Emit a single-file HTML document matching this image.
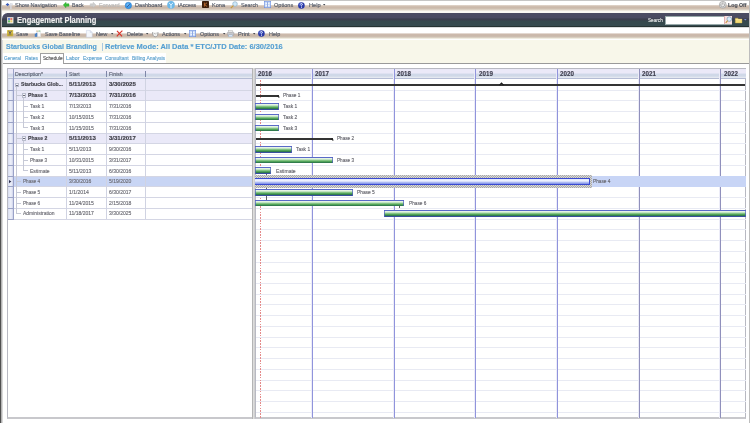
<!DOCTYPE html><html><head><meta charset="utf-8"><title>Engagement Planning</title><style>
*{margin:0;padding:0;box-sizing:border-box}
html,body{width:750px;height:423px;overflow:hidden;background:#fff;font-family:"Liberation Sans",sans-serif}
.a{position:absolute}
.t{position:absolute;white-space:nowrap;line-height:1;transform-origin:0 0;-webkit-text-stroke:0.15px currentColor}
</style></head><body><div id="root" style="position:absolute;left:0;top:0;width:750px;height:423px;overflow:hidden;filter:blur(0.5px)">
<div class="a" style="left:0.00px;top:0.00px;width:750.00px;height:1.00px;background:#c6c6c6"></div>
<div class="a" style="left:1.00px;top:1.00px;width:749.00px;height:11.80px;background:linear-gradient(to bottom,#fff 0px,#fff 3.5px,#d2c1b3 4.8px,#cbb9ab 6.5px,#d0c2b4 8px,#efeadf 9.6px,#fbfaf3 10.5px,#fbfaf3 11.8px)"></div>
<div class="a" style="left:2px;top:12.8px;width:746.8px;height:14.4px;border-top-left-radius:5.5px 6px;background:linear-gradient(to bottom,#4c4c63 0px,#4a4b61 4.5px,#3d404f 6px,#3b3f4c 7px,#36484d 8px,#364a4e 12.5px,#24302f 13.6px,#1e2a2c 14.4px)"></div>
<div class="a" style="left:1.00px;top:27.20px;width:749.00px;height:12.30px;background:linear-gradient(to bottom,#9aa0a0 0px,#fff 0.8px,#fff 5.8px,#cfbdb0 7px,#c9b6a8 8px,#cdbfb1 10px,#efece0 11.5px,#f7f6e9 12.3px)"></div>
<div class="a" style="left:1.00px;top:39.50px;width:748.50px;height:23.50px;background:#f8f7ea"></div>
<div class="a" style="left:0.00px;top:0.00px;width:1.00px;height:423.00px;background:#505050"></div>
<div class="a" style="left:1.00px;top:0.00px;width:1.00px;height:423.00px;background:#b4b4b4"></div>
<div class="t" style="left:15.00px;top:1.99px;font-size:6.2px;color:#535a68;transform:scaleX(0.9027);">Show Navigation</div>
<div class="t" style="left:71.60px;top:1.99px;font-size:6.2px;color:#535a68;transform:scaleX(0.8488);">Back</div>
<div class="t" style="left:99.30px;top:1.99px;font-size:6.2px;color:#b9b9b9;transform:scaleX(0.9104);">Forward</div>
<div class="t" style="left:135.30px;top:1.99px;font-size:6.2px;color:#535a68;transform:scaleX(0.9034);">Dashboard</div>
<div class="t" style="left:178.00px;top:1.99px;font-size:6.2px;color:#535a68;transform:scaleX(0.8567);">iAccess</div>
<div class="t" style="left:211.60px;top:1.99px;font-size:6.2px;color:#535a68;transform:scaleX(0.9048);">Kona</div>
<div class="t" style="left:240.80px;top:1.99px;font-size:6.2px;color:#535a68;transform:scaleX(0.8705);">Search</div>
<div class="t" style="left:273.60px;top:1.99px;font-size:6.2px;color:#535a68;transform:scaleX(0.8986);">Options</div>
<div class="t" style="left:308.80px;top:1.99px;font-size:6.2px;color:#535a68;transform:scaleX(0.9176);">Help</div>
<svg class="a" style="left:323.4px;top:4.2px;overflow:visible" width="2.6" height="2" viewBox="0 0 2.6 2"><path d="M0 0H2.4L1.2 1.6Z" fill="#3a3e48"/></svg>
<div class="t" style="left:728.40px;top:1.99px;font-size:6.2px;color:#4a4e56;font-weight:bold;transform:scaleX(0.8441);">Log Off</div>
<svg class="a" style="left:5px;top:1.8px;overflow:visible" width="8" height="7" viewBox="0 0 8 7"><path d="M0.6 2.6L3.2 0.8L3.2 4.4Z" fill="#3a5ab8"/><rect x="2.6" y="2" width="1.6" height="1.2" fill="#3a5ab8"/><rect x="5.2" y="1" width="1.4" height="6.2" fill="#d4d8e0"/><rect x="6.8" y="1.6" width="1" height="1" fill="#c0c6d0"/></svg>
<svg class="a" style="left:62.5px;top:1.8px;overflow:visible" width="6.2" height="6" viewBox="0 0 6.2 6"><path d="M0.2 3L3 0.2L3 1.8L6 1.8L6 4.2L3 4.2L3 5.8Z" fill="#38c038" stroke="#2a9a2a" stroke-width="0.4"/></svg>
<svg class="a" style="left:90px;top:1.8px;overflow:visible" width="6.2" height="6" viewBox="0 0 6.2 6"><path d="M6 3L3.2 0.2L3.2 1.8L0.2 1.8L0.2 4.2L3.2 4.2L3.2 5.8Z" fill="#cfcfcf" stroke="#b8b8b8" stroke-width="0.4"/></svg>
<svg class="a" style="left:125.3px;top:1.8px;overflow:visible" width="7" height="7" viewBox="0 0 7 7"><circle cx="3.4" cy="3.5" r="3.2" fill="#3a98e8" stroke="#2a78c8" stroke-width="0.5"/><circle cx="3.0" cy="2.8" r="1.6" fill="#7cc4f8" opacity="0.8"/><path d="M2.2 4.8L4.6 2.2" stroke="#283878" stroke-width="0.8"/></svg>
<svg class="a" style="left:166.6px;top:1.0px;overflow:visible" width="8" height="8" viewBox="0 0 8 8"><circle cx="4" cy="3.9" r="3.8" fill="#6cb8e8"/><path d="M2 1.8L4 4L6 1.8M4 4L4 7.2" stroke="#e8f6ff" stroke-width="0.9" fill="none"/></svg>
<svg class="a" style="left:201.7px;top:1.4px;overflow:visible" width="7.2" height="7.2" viewBox="0 0 7.2 7.2"><rect x="0" y="0" width="7" height="7" rx="0.8" fill="#3a1e0c"/><path d="M2.4 1.6L2.4 5.6M5 1.8L2.6 3.6L5.2 5.6" stroke="#d07a3a" stroke-width="0.8" fill="none"/></svg>
<svg class="a" style="left:229.8px;top:1.2px;overflow:visible" width="8" height="8" viewBox="0 0 8 8"><circle cx="5" cy="3" r="2.3" fill="#cfe8f8" stroke="#8ab0cc" stroke-width="0.7"/><path d="M3.4 4.6L0.8 7.2" stroke="#c89a3a" stroke-width="1.2"/></svg>
<svg class="a" style="left:264px;top:1.3px;overflow:visible" width="7" height="7" viewBox="0 0 7 7"><rect x="0.3" y="0.3" width="6.4" height="6.4" fill="#c8daf8" stroke="#6a8ce0" stroke-width="0.6"/><path d="M1.5 2.4H3M4 2.4H5.5M1.5 4.6H3M4 4.6H5.5" stroke="#fff" stroke-width="0.8"/><path d="M3.5 1V6" stroke="#5a7ad0" stroke-width="0.5"/></svg>
<svg class="a" style="left:298.4px;top:1.6px;overflow:visible" width="7" height="7" viewBox="0 0 7 7"><circle cx="3.4" cy="3.5" r="3.3" fill="#2a3aa8"/><circle cx="2.6" cy="2.4" r="1.6" fill="#5a72d8" opacity="0.7"/><path d="M2.4 2.5Q2.6 1.4 3.6 1.5Q4.6 1.7 4.4 2.6Q4.2 3.2 3.5 3.6L3.5 4.5" stroke="#fff" stroke-width="0.8" fill="none"/><rect x="3.1" y="5.1" width="0.8" height="0.8" fill="#fff"/></svg>
<svg class="a" style="left:718.8px;top:1.0px;overflow:visible" width="7.6" height="7.6" viewBox="0 0 7.6 7.6"><circle cx="3.8" cy="3.8" r="3.4" fill="#e8e8e8" stroke="#9a9a9a" stroke-width="0.7"/><path d="M2.3 2.6A2 2 0 1 0 5.3 2.6" stroke="#8a8a8a" stroke-width="0.7" fill="none"/><path d="M3.8 1.4V3.6" stroke="#8a8a8a" stroke-width="0.7"/></svg>
<svg class="a" style="left:6.6px;top:16.6px;overflow:visible" width="6.4" height="6.4" viewBox="0 0 6.4 6.4"><rect x="0.2" y="0.2" width="6" height="6" fill="#f4f4f4" stroke="#d0d0d0" stroke-width="0.4"/><rect x="1" y="1" width="2.1" height="2.1" fill="#6a8ad8"/><rect x="3.3" y="1" width="2.1" height="2.1" fill="#e07a6a"/><rect x="1" y="3.3" width="2.1" height="2.1" fill="#6ac06a"/><rect x="3.3" y="3.3" width="2.1" height="2.1" fill="#f0d070"/></svg>
<div class="t" style="left:16.50px;top:16.20px;font-size:8.4px;color:#f0f0f0;font-weight:bold;transform:scaleX(0.9013);">Engagement Planning</div>
<div class="t" style="left:648.00px;top:18.07px;font-size:5.6px;color:#e4e6e6;transform:scaleX(0.8342);">Search</div>
<div class="a" style="left:664.90px;top:15.50px;width:67.50px;height:9.30px;background:#fff;border:0.5px solid #9aa"></div>
<div class="a" style="left:724.00px;top:16.00px;width:7.80px;height:8.40px;background:#f6dede;border-left:0.5px solid #e0b0b0"></div>
<svg class="a" style="left:724.6px;top:16.4px;overflow:visible" width="7" height="7.6" viewBox="0 0 7 7.6"><circle cx="4.3" cy="3.1" r="2.3" fill="#d8ecf8" stroke="#7a9ab8" stroke-width="0.7"/><path d="M2.7 4.7L0.7 6.8" stroke="#c8983a" stroke-width="1.1"/></svg>
<svg class="a" style="left:735.2px;top:17px;overflow:visible" width="7.4" height="6.4" viewBox="0 0 7.4 6.4"><path d="M0.3 1.2L2.8 1.2L3.6 2H7V6H0.3Z" fill="#f4dc78" stroke="#c8a840" stroke-width="0.4"/><path d="M0.3 2.6H7" stroke="#fff0b0" stroke-width="0.5"/></svg>
<svg class="a" style="left:744px;top:19.4px;overflow:visible" width="3" height="2" viewBox="0 0 3 2"><path d="M0 0H2.6L1.3 1.6Z" fill="#7a90d0"/></svg>
<svg class="a" style="left:6.6px;top:30.4px;overflow:visible" width="6.4" height="6.4" viewBox="0 0 6.4 6.4"><rect x="0" y="0" width="6.2" height="6.2" rx="0.4" fill="#d4bc48"/><rect x="0.6" y="3.6" width="5" height="2.2" fill="#b8a038"/><path d="M1.6 0.8L3 3.2L4.6 0.8" stroke="#4a4a6a" stroke-width="0.8" fill="none"/><rect x="2.6" y="2.6" width="0.8" height="2" fill="#4a4a6a"/></svg>
<div class="t" style="left:16.30px;top:30.99px;font-size:6.2px;color:#535a68;transform:scaleX(0.8775);">Save</div>
<svg class="a" style="left:34.3px;top:30.3px;overflow:visible" width="7" height="7" viewBox="0 0 7 7"><rect x="3.4" y="1.8" width="3.3" height="5" fill="#f8f8f8" stroke="#c8ccd4" stroke-width="0.3"/><rect x="0.8" y="3.6" width="1.1" height="3.2" fill="#3a7ac8"/><rect x="2.1" y="2.8" width="1.1" height="4" fill="#3a7ac8"/><path d="M2 1.1H4.4" stroke="#c8b080" stroke-width="0.8"/><path d="M4.6 1L6.4 1" stroke="#5ab86a" stroke-width="0.8"/></svg>
<div class="t" style="left:44.70px;top:30.99px;font-size:6.2px;color:#535a68;transform:scaleX(0.8906);">Save Baseline</div>
<svg class="a" style="left:85.6px;top:29.8px;overflow:visible" width="6.8" height="7.8" viewBox="0 0 6.8 7.8"><path d="M0.4 0.4H4.2L6.2 2.4V7.2H0.4Z" fill="#f4f7fc" stroke="#c4cce0" stroke-width="0.5"/><path d="M4.2 0.4V2.4H6.2" fill="#dfe6f2" stroke="#c4cce0" stroke-width="0.4"/></svg>
<div class="t" style="left:96.00px;top:30.99px;font-size:6.2px;color:#535a68;transform:scaleX(0.9111);">New</div>
<svg class="a" style="left:111.0px;top:33.0px;overflow:visible" width="2.6" height="2" viewBox="0 0 2.6 2"><path d="M0 0H2.4L1.2 1.6Z" fill="#3a3e48"/></svg>
<svg class="a" style="left:115.8px;top:30.0px;overflow:visible" width="7" height="7" viewBox="0 0 7 7"><path d="M0.8 6.4Q3 3.6 6.4 0.6M1 0.8Q3.6 3.4 6 6.4" stroke="#d8342a" stroke-width="1.2" fill="none"/></svg>
<div class="t" style="left:126.70px;top:30.99px;font-size:6.2px;color:#535a68;transform:scaleX(0.8928);">Delete</div>
<svg class="a" style="left:146.4px;top:33.0px;overflow:visible" width="2.6" height="2" viewBox="0 0 2.6 2"><path d="M0 0H2.4L1.2 1.6Z" fill="#3a3e48"/></svg>
<svg class="a" style="left:151.8px;top:30.6px;overflow:visible" width="6.6" height="6.4" viewBox="0 0 6.6 6.4"><path d="M0.6 1.2Q0.6 5.8 3.3 5.8Q6 5.8 6 1.2" stroke="#9a9a9a" stroke-width="1" fill="#f2f2f2"/><path d="M2 2.2Q3.3 3.8 4.6 2.2" stroke="#a8a8a8" stroke-width="0.7" fill="none"/></svg>
<div class="t" style="left:162.00px;top:30.99px;font-size:6.2px;color:#535a68;transform:scaleX(0.8853);">Actions</div>
<svg class="a" style="left:184.20000000000002px;top:33.0px;overflow:visible" width="2.6" height="2" viewBox="0 0 2.6 2"><path d="M0 0H2.4L1.2 1.6Z" fill="#3a3e48"/></svg>
<svg class="a" style="left:188.8px;top:30.3px;overflow:visible" width="7" height="7" viewBox="0 0 7 7"><rect x="0.3" y="0.3" width="6.4" height="6.4" fill="#c8daf8" stroke="#6a8ce0" stroke-width="0.6"/><path d="M1.5 2.4H3M4 2.4H5.5M1.5 4.6H3M4 4.6H5.5" stroke="#fff" stroke-width="0.8"/><path d="M3.5 1V6" stroke="#5a7ad0" stroke-width="0.5"/></svg>
<div class="t" style="left:199.50px;top:30.99px;font-size:6.2px;color:#535a68;transform:scaleX(0.8846);">Options</div>
<svg class="a" style="left:222.6px;top:33.0px;overflow:visible" width="2.6" height="2" viewBox="0 0 2.6 2"><path d="M0 0H2.4L1.2 1.6Z" fill="#3a3e48"/></svg>
<svg class="a" style="left:227.2px;top:30.2px;overflow:visible" width="7.2" height="7.2" viewBox="0 0 7.2 7.2"><rect x="1.8" y="0.4" width="3.6" height="2" fill="#f4f4f4" stroke="#a0a0a0" stroke-width="0.4"/><rect x="0.3" y="2.2" width="6.6" height="3" rx="0.6" fill="#c8c8cc" stroke="#8a8a90" stroke-width="0.4"/><rect x="1.8" y="5" width="3.6" height="1.8" fill="#e8eef8" stroke="#8ab0d8" stroke-width="0.4"/></svg>
<div class="t" style="left:237.90px;top:30.99px;font-size:6.2px;color:#535a68;transform:scaleX(0.9178);">Print</div>
<svg class="a" style="left:253.4px;top:33.0px;overflow:visible" width="2.6" height="2" viewBox="0 0 2.6 2"><path d="M0 0H2.4L1.2 1.6Z" fill="#3a3e48"/></svg>
<svg class="a" style="left:258.4px;top:30.3px;overflow:visible" width="7" height="7" viewBox="0 0 7 7"><circle cx="3.4" cy="3.5" r="3.3" fill="#2a3aa8"/><circle cx="2.6" cy="2.4" r="1.6" fill="#5a72d8" opacity="0.7"/><path d="M2.4 2.5Q2.6 1.4 3.6 1.5Q4.6 1.7 4.4 2.6Q4.2 3.2 3.5 3.6L3.5 4.5" stroke="#fff" stroke-width="0.8" fill="none"/><rect x="3.1" y="5.1" width="0.8" height="0.8" fill="#fff"/></svg>
<div class="t" style="left:268.80px;top:30.99px;font-size:6.2px;color:#535a68;transform:scaleX(0.8784);">Help</div>
<div class="t" style="left:6.00px;top:43.00px;font-size:7.7px;color:#559fd2;font-weight:bold;transform:scaleX(0.9168);">Starbucks Global Branding</div>
<div class="a" style="left:102.00px;top:43.20px;width:0.80px;height:7.50px;background:#a8c8e0"></div>
<div class="t" style="left:105.00px;top:43.00px;font-size:7.7px;color:#559fd2;font-weight:bold;transform:scaleX(0.9734);">Retrieve Mode: All Data * ETC/JTD Date: 6/30/2016</div>
<div class="a" style="left:2.50px;top:52.80px;width:163.50px;height:10.20px;background:#fff"></div>
<div class="a" style="left:2.00px;top:63.00px;width:747.50px;height:1.00px;background:#9a9a9a"></div>
<div class="t" style="left:4.20px;top:55.65px;font-size:5.0px;color:#62a4cf;transform:scaleX(0.9445);">General</div>
<div class="t" style="left:25.00px;top:55.65px;font-size:5.0px;color:#62a4cf;transform:scaleX(0.9953);">Rates</div>
<div class="a" style="left:40.00px;top:53.00px;width:24.40px;height:10.50px;background:#fff;border:0.9px solid #a0a0a0;border-bottom:none"></div>
<div class="t" style="left:42.50px;top:55.65px;font-size:5.0px;color:#555;transform:scaleX(0.9353);">Schedule</div>
<div class="t" style="left:66.00px;top:55.65px;font-size:5.0px;color:#62a4cf;transform:scaleX(1.048);">Labor</div>
<div class="t" style="left:83.00px;top:55.65px;font-size:5.0px;color:#62a4cf;transform:scaleX(0.9765);">Expense</div>
<div class="t" style="left:105.00px;top:55.65px;font-size:5.0px;color:#62a4cf;transform:scaleX(0.9874);">Consultant</div>
<div class="t" style="left:132.00px;top:55.65px;font-size:5.0px;color:#62a4cf;transform:scaleX(0.9979);">Billing Analysis</div>
<div class="a" style="left:7.00px;top:68.20px;width:245.70px;height:350.80px;background:#fff;border:1px solid #b8b9c2;border-bottom:2px solid #c8c8cc"></div>
<div class="a" style="left:8.00px;top:69.00px;width:244.20px;height:10.46px;background:linear-gradient(to bottom,#ebe9f8 0px,#ebe9f8 4.2px,#cfd8e8 4.9px,#d0d9e8 7.3px,#e4e8f0 8px,#e4e8f0 8.6px,#b4bcd4 9.3px,#b4bcd4 10.46px)"></div>
<div class="t" style="left:15.20px;top:71.66px;font-size:5.6px;color:#5e6474;transform:scaleX(0.9275);">Description*</div>
<div class="t" style="left:69.00px;top:71.66px;font-size:5.6px;color:#5e6474;transform:scaleX(0.9048);">Start</div>
<div class="t" style="left:108.60px;top:71.66px;font-size:5.6px;color:#5e6474;transform:scaleX(0.9172);">Finish</div>
<div class="a" style="left:66.00px;top:70.50px;width:0.90px;height:6.50px;background:#7f87a8"></div>
<div class="a" style="left:105.60px;top:70.50px;width:0.90px;height:6.50px;background:#7f87a8"></div>
<div class="a" style="left:144.90px;top:70.50px;width:0.90px;height:6.50px;background:#7f87a8"></div>
<div class="a" style="left:13.20px;top:79.46px;width:239.00px;height:10.74px;background:#eae9f8"></div>
<div class="a" style="left:13.20px;top:90.20px;width:239.00px;height:10.74px;background:#eae9f8"></div>
<div class="a" style="left:13.20px;top:133.16px;width:239.00px;height:10.74px;background:#eae9f8"></div>
<div class="a" style="left:13.20px;top:176.12px;width:239.00px;height:10.74px;background:#c8d5f4"></div>
<div class="a" style="left:13.20px;top:90.00px;width:239.00px;height:1.00px;background:#d4d6e4"></div>
<div class="a" style="left:13.20px;top:100.00px;width:239.00px;height:1.00px;background:#d4d6e4"></div>
<div class="a" style="left:13.20px;top:111.00px;width:239.00px;height:1.00px;background:#d4d6e4"></div>
<div class="a" style="left:13.20px;top:122.00px;width:239.00px;height:1.00px;background:#d4d6e4"></div>
<div class="a" style="left:13.20px;top:133.00px;width:239.00px;height:1.00px;background:#d4d6e4"></div>
<div class="a" style="left:13.20px;top:143.00px;width:239.00px;height:1.00px;background:#d4d6e4"></div>
<div class="a" style="left:13.20px;top:154.00px;width:239.00px;height:1.00px;background:#d4d6e4"></div>
<div class="a" style="left:13.20px;top:165.00px;width:239.00px;height:1.00px;background:#d4d6e4"></div>
<div class="a" style="left:13.20px;top:176.00px;width:239.00px;height:1.00px;background:#d4d6e4"></div>
<div class="a" style="left:13.20px;top:186.00px;width:239.00px;height:1.00px;background:#d4d6e4"></div>
<div class="a" style="left:13.20px;top:197.00px;width:239.00px;height:1.00px;background:#d4d6e4"></div>
<div class="a" style="left:13.20px;top:208.00px;width:239.00px;height:1.00px;background:#d4d6e4"></div>
<div class="a" style="left:13.20px;top:219.00px;width:239.00px;height:1.00px;background:#d4d6e4"></div>
<div class="a" style="left:12.80px;top:79.46px;width:0.80px;height:139.62px;background:#d0d3e2"></div>
<div class="a" style="left:66.00px;top:79.46px;width:0.80px;height:139.62px;background:#d0d3e2"></div>
<div class="a" style="left:105.60px;top:79.46px;width:0.80px;height:139.62px;background:#d0d3e2"></div>
<div class="a" style="left:144.90px;top:79.46px;width:0.80px;height:139.62px;background:#d0d3e2"></div>
<div class="a" style="left:8.00px;top:79.46px;width:5.40px;height:10.74px;background:linear-gradient(90deg,#d6dbee 0%,#eceff9 45%,#e6e9f6 70%,#cdd2ea 100%)"></div>
<div class="a" style="left:8.00px;top:90.20px;width:5.40px;height:10.74px;background:linear-gradient(90deg,#d6dbee 0%,#eceff9 45%,#e6e9f6 70%,#cdd2ea 100%)"></div>
<div class="a" style="left:8.00px;top:100.94px;width:5.40px;height:10.74px;background:linear-gradient(90deg,#d6dbee 0%,#eceff9 45%,#e6e9f6 70%,#cdd2ea 100%)"></div>
<div class="a" style="left:8.00px;top:111.68px;width:5.40px;height:10.74px;background:linear-gradient(90deg,#d6dbee 0%,#eceff9 45%,#e6e9f6 70%,#cdd2ea 100%)"></div>
<div class="a" style="left:8.00px;top:122.42px;width:5.40px;height:10.74px;background:linear-gradient(90deg,#d6dbee 0%,#eceff9 45%,#e6e9f6 70%,#cdd2ea 100%)"></div>
<div class="a" style="left:8.00px;top:133.16px;width:5.40px;height:10.74px;background:linear-gradient(90deg,#d6dbee 0%,#eceff9 45%,#e6e9f6 70%,#cdd2ea 100%)"></div>
<div class="a" style="left:8.00px;top:143.90px;width:5.40px;height:10.74px;background:linear-gradient(90deg,#d6dbee 0%,#eceff9 45%,#e6e9f6 70%,#cdd2ea 100%)"></div>
<div class="a" style="left:8.00px;top:154.64px;width:5.40px;height:10.74px;background:linear-gradient(90deg,#d6dbee 0%,#eceff9 45%,#e6e9f6 70%,#cdd2ea 100%)"></div>
<div class="a" style="left:8.00px;top:165.38px;width:5.40px;height:10.74px;background:linear-gradient(90deg,#d6dbee 0%,#eceff9 45%,#e6e9f6 70%,#cdd2ea 100%)"></div>
<div class="a" style="left:8.00px;top:176.12px;width:5.40px;height:10.74px;background:linear-gradient(90deg,#d6dbee 0%,#eceff9 45%,#e6e9f6 70%,#cdd2ea 100%)"></div>
<div class="a" style="left:8.00px;top:186.86px;width:5.40px;height:10.74px;background:linear-gradient(90deg,#d6dbee 0%,#eceff9 45%,#e6e9f6 70%,#cdd2ea 100%)"></div>
<div class="a" style="left:8.00px;top:197.60px;width:5.40px;height:10.74px;background:linear-gradient(90deg,#d6dbee 0%,#eceff9 45%,#e6e9f6 70%,#cdd2ea 100%)"></div>
<div class="a" style="left:8.00px;top:208.34px;width:5.40px;height:10.74px;background:linear-gradient(90deg,#d6dbee 0%,#eceff9 45%,#e6e9f6 70%,#cdd2ea 100%)"></div>
<div class="a" style="left:8.00px;top:90.00px;width:5.40px;height:1.00px;background:#9aa2c6"></div>
<div class="a" style="left:8.00px;top:100.00px;width:5.40px;height:1.00px;background:#9aa2c6"></div>
<div class="a" style="left:8.00px;top:111.00px;width:5.40px;height:1.00px;background:#9aa2c6"></div>
<div class="a" style="left:8.00px;top:122.00px;width:5.40px;height:1.00px;background:#9aa2c6"></div>
<div class="a" style="left:8.00px;top:133.00px;width:5.40px;height:1.00px;background:#9aa2c6"></div>
<div class="a" style="left:8.00px;top:143.00px;width:5.40px;height:1.00px;background:#9aa2c6"></div>
<div class="a" style="left:8.00px;top:154.00px;width:5.40px;height:1.00px;background:#9aa2c6"></div>
<div class="a" style="left:8.00px;top:165.00px;width:5.40px;height:1.00px;background:#9aa2c6"></div>
<div class="a" style="left:8.00px;top:176.00px;width:5.40px;height:1.00px;background:#9aa2c6"></div>
<div class="a" style="left:8.00px;top:186.00px;width:5.40px;height:1.00px;background:#9aa2c6"></div>
<div class="a" style="left:8.00px;top:197.00px;width:5.40px;height:1.00px;background:#9aa2c6"></div>
<div class="a" style="left:8.00px;top:208.00px;width:5.40px;height:1.00px;background:#9aa2c6"></div>
<div class="a" style="left:8.00px;top:219.00px;width:5.40px;height:1.00px;background:#9aa2c6"></div>
<div class="a" style="left:12.60px;top:69.20px;width:0.90px;height:150.56px;background:#9aa2c8"></div>
<svg class="a" style="left:8.9px;top:179.72px" width="3" height="4" viewBox="0 0 3 4"><path d="M0 0L2.4 1.6L0 3.2Z" fill="#2a2e50"/></svg>
<div class="a" style="left:16.10px;top:86.00px;width:0.60px;height:127.71px;background:#c6c9d6"></div>
<div class="a" style="left:16.10px;top:95.27px;width:5.50px;height:0.60px;background:#c6c9d6"></div>
<div class="a" style="left:16.10px;top:138.23px;width:5.50px;height:0.60px;background:#c6c9d6"></div>
<div class="a" style="left:16.10px;top:181.19px;width:5.20px;height:0.60px;background:#c6c9d6"></div>
<div class="a" style="left:16.10px;top:191.93px;width:5.20px;height:0.60px;background:#c6c9d6"></div>
<div class="a" style="left:16.10px;top:202.67px;width:5.20px;height:0.60px;background:#c6c9d6"></div>
<div class="a" style="left:16.10px;top:213.41px;width:5.20px;height:0.60px;background:#c6c9d6"></div>
<div class="a" style="left:23.00px;top:98.07px;width:0.60px;height:29.72px;background:#c6c9d6"></div>
<div class="a" style="left:23.00px;top:106.01px;width:4.60px;height:0.60px;background:#c6c9d6"></div>
<div class="a" style="left:23.00px;top:116.75px;width:4.60px;height:0.60px;background:#c6c9d6"></div>
<div class="a" style="left:23.00px;top:127.49px;width:4.60px;height:0.60px;background:#c6c9d6"></div>
<div class="a" style="left:23.00px;top:141.03px;width:0.60px;height:29.72px;background:#c6c9d6"></div>
<div class="a" style="left:23.00px;top:148.97px;width:4.60px;height:0.60px;background:#c6c9d6"></div>
<div class="a" style="left:23.00px;top:159.71px;width:4.60px;height:0.60px;background:#c6c9d6"></div>
<div class="a" style="left:23.00px;top:170.45px;width:4.60px;height:0.60px;background:#c6c9d6"></div>
<div class="a" style="left:15.00px;top:82.73px;width:4.20px;height:4.20px;background:#f4f4f8;border:0.6px solid #b8bccc"></div>
<div class="a" style="left:16.00px;top:84.53px;width:2.20px;height:0.60px;background:#6a6a7a"></div>
<div class="a" style="left:22.00px;top:93.47px;width:4.20px;height:4.20px;background:#f4f4f8;border:0.6px solid #b8bccc"></div>
<div class="a" style="left:23.00px;top:95.27px;width:2.20px;height:0.60px;background:#6a6a7a"></div>
<div class="a" style="left:22.00px;top:136.43px;width:4.20px;height:4.20px;background:#f4f4f8;border:0.6px solid #b8bccc"></div>
<div class="a" style="left:23.00px;top:138.23px;width:2.20px;height:0.60px;background:#6a6a7a"></div>
<div class="t" style="left:21.00px;top:81.99px;font-size:5.6px;color:#3c3c44;font-weight:bold;transform:scaleX(0.912);">Starbucks Glob...</div>
<div class="t" style="left:69.00px;top:81.99px;font-size:5.6px;color:#3c3c44;font-weight:bold;transform:scaleX(1.0902);">5/11/2013</div>
<div class="t" style="left:108.50px;top:81.99px;font-size:5.6px;color:#3c3c44;font-weight:bold;transform:scaleX(1.0767);">3/30/2025</div>
<div class="t" style="left:27.70px;top:93.33px;font-size:5.6px;color:#3c3c44;font-weight:bold;transform:scaleX(0.9118);">Phase 1</div>
<div class="t" style="left:69.00px;top:93.33px;font-size:5.6px;color:#3c3c44;font-weight:bold;transform:scaleX(1.0767);">7/13/2013</div>
<div class="t" style="left:108.50px;top:93.33px;font-size:5.6px;color:#3c3c44;font-weight:bold;transform:scaleX(1.0767);">7/31/2016</div>
<div class="t" style="left:30.00px;top:104.07px;font-size:5.6px;color:#6c6c74;transform:scaleX(0.8898);">Task 1</div>
<div class="t" style="left:69.00px;top:104.07px;font-size:5.6px;color:#6c6c74;transform:scaleX(0.8996);">7/13/2013</div>
<div class="t" style="left:108.50px;top:104.07px;font-size:5.6px;color:#6c6c74;transform:scaleX(0.8996);">7/31/2016</div>
<div class="t" style="left:30.00px;top:114.81px;font-size:5.6px;color:#6c6c74;transform:scaleX(0.8898);">Task 2</div>
<div class="t" style="left:69.00px;top:114.81px;font-size:5.6px;color:#6c6c74;transform:scaleX(0.8885);">10/15/2015</div>
<div class="t" style="left:108.50px;top:114.81px;font-size:5.6px;color:#6c6c74;transform:scaleX(0.8996);">7/31/2016</div>
<div class="t" style="left:30.00px;top:125.55px;font-size:5.6px;color:#6c6c74;transform:scaleX(0.8898);">Task 3</div>
<div class="t" style="left:69.00px;top:125.55px;font-size:5.6px;color:#6c6c74;transform:scaleX(0.9019);">11/15/2015</div>
<div class="t" style="left:108.50px;top:125.55px;font-size:5.6px;color:#6c6c74;transform:scaleX(0.8996);">7/31/2016</div>
<div class="t" style="left:27.70px;top:136.29px;font-size:5.6px;color:#3c3c44;font-weight:bold;transform:scaleX(0.9118);">Phase 2</div>
<div class="t" style="left:69.00px;top:136.29px;font-size:5.6px;color:#3c3c44;font-weight:bold;transform:scaleX(1.0902);">5/11/2013</div>
<div class="t" style="left:108.50px;top:136.29px;font-size:5.6px;color:#3c3c44;font-weight:bold;transform:scaleX(1.0767);">3/31/2017</div>
<div class="t" style="left:30.00px;top:147.03px;font-size:5.6px;color:#6c6c74;transform:scaleX(0.8898);">Task 1</div>
<div class="t" style="left:69.00px;top:147.03px;font-size:5.6px;color:#6c6c74;transform:scaleX(0.9149);">5/11/2013</div>
<div class="t" style="left:108.50px;top:147.03px;font-size:5.6px;color:#6c6c74;transform:scaleX(0.8996);">9/30/2016</div>
<div class="t" style="left:30.00px;top:157.77px;font-size:5.6px;color:#6c6c74;transform:scaleX(0.8322);">Phase 3</div>
<div class="t" style="left:69.00px;top:157.77px;font-size:5.6px;color:#6c6c74;transform:scaleX(0.8885);">10/31/2015</div>
<div class="t" style="left:108.50px;top:157.77px;font-size:5.6px;color:#6c6c74;transform:scaleX(0.8996);">3/31/2017</div>
<div class="t" style="left:30.00px;top:168.51px;font-size:5.6px;color:#6c6c74;transform:scaleX(0.9043);">Estimate</div>
<div class="t" style="left:69.00px;top:168.51px;font-size:5.6px;color:#6c6c74;transform:scaleX(0.9149);">5/11/2013</div>
<div class="t" style="left:108.50px;top:168.51px;font-size:5.6px;color:#6c6c74;transform:scaleX(0.8996);">6/30/2016</div>
<div class="t" style="left:22.50px;top:179.25px;font-size:5.6px;color:#6c6c74;transform:scaleX(0.8322);">Phase 4</div>
<div class="t" style="left:69.00px;top:179.25px;font-size:5.6px;color:#6c6c74;transform:scaleX(0.8996);">3/30/2016</div>
<div class="t" style="left:108.50px;top:179.25px;font-size:5.6px;color:#6c6c74;transform:scaleX(0.8996);">5/19/2020</div>
<div class="t" style="left:22.50px;top:189.99px;font-size:5.6px;color:#6c6c74;transform:scaleX(0.8322);">Phase 5</div>
<div class="t" style="left:69.00px;top:189.99px;font-size:5.6px;color:#6c6c74;transform:scaleX(0.9139);">1/1/2014</div>
<div class="t" style="left:108.50px;top:189.99px;font-size:5.6px;color:#6c6c74;transform:scaleX(0.8996);">6/30/2017</div>
<div class="t" style="left:22.50px;top:200.73px;font-size:5.6px;color:#6c6c74;transform:scaleX(0.8322);">Phase 6</div>
<div class="t" style="left:69.00px;top:200.73px;font-size:5.6px;color:#6c6c74;transform:scaleX(0.9019);">11/24/2015</div>
<div class="t" style="left:108.50px;top:200.73px;font-size:5.6px;color:#6c6c74;transform:scaleX(0.8996);">2/15/2018</div>
<div class="t" style="left:22.50px;top:211.47px;font-size:5.6px;color:#6c6c74;transform:scaleX(0.8878);">Administration</div>
<div class="t" style="left:69.00px;top:211.47px;font-size:5.6px;color:#6c6c74;transform:scaleX(0.9019);">11/18/2017</div>
<div class="t" style="left:108.50px;top:211.47px;font-size:5.6px;color:#6c6c74;transform:scaleX(0.8996);">3/30/2025</div>
<div class="a" style="left:252.40px;top:68.20px;width:2.90px;height:350.80px;background:linear-gradient(90deg,#b4b4b4 0,#b4b4b4 0.6px,#dedede 0.9px,#dcdcdc 2.2px,#c0c0c0 2.9px)"></div>
<div class="a" style="left:255.30px;top:68.20px;width:491.00px;height:350.80px;background:#fff;border:1px solid #b8b9c2;border-bottom:2px solid #c8c8cc"></div>
<div class="a" style="left:256.30px;top:69.00px;width:489.40px;height:10.46px;background:linear-gradient(to bottom,#ebe9f8 0px,#ebe9f8 4.2px,#cfd8e8 4.9px,#d0d9e8 7.3px,#e4e8f0 8px,#e4e8f0 8.6px,#b4bcd4 9.3px,#b4bcd4 10.46px)"></div>
<div class="a" style="left:256.30px;top:90.00px;width:489.40px;height:1.00px;background:#e8eaf3"></div>
<div class="a" style="left:256.30px;top:100.00px;width:489.40px;height:1.00px;background:#e8eaf3"></div>
<div class="a" style="left:256.30px;top:111.00px;width:489.40px;height:1.00px;background:#e8eaf3"></div>
<div class="a" style="left:256.30px;top:122.00px;width:489.40px;height:1.00px;background:#e8eaf3"></div>
<div class="a" style="left:256.30px;top:133.00px;width:489.40px;height:1.00px;background:#e8eaf3"></div>
<div class="a" style="left:256.30px;top:143.00px;width:489.40px;height:1.00px;background:#e8eaf3"></div>
<div class="a" style="left:256.30px;top:154.00px;width:489.40px;height:1.00px;background:#e8eaf3"></div>
<div class="a" style="left:256.30px;top:165.00px;width:489.40px;height:1.00px;background:#e8eaf3"></div>
<div class="a" style="left:256.30px;top:176.00px;width:489.40px;height:1.00px;background:#e8eaf3"></div>
<div class="a" style="left:256.30px;top:186.00px;width:489.40px;height:1.00px;background:#e8eaf3"></div>
<div class="a" style="left:256.30px;top:197.00px;width:489.40px;height:1.00px;background:#e8eaf3"></div>
<div class="a" style="left:256.30px;top:208.00px;width:489.40px;height:1.00px;background:#e8eaf3"></div>
<div class="a" style="left:256.30px;top:219.00px;width:489.40px;height:1.00px;background:#e8eaf3"></div>
<div class="a" style="left:256.30px;top:229.00px;width:489.40px;height:1.00px;background:#e8eaf3"></div>
<div class="a" style="left:256.30px;top:240.00px;width:489.40px;height:1.00px;background:#e8eaf3"></div>
<div class="a" style="left:256.30px;top:251.00px;width:489.40px;height:1.00px;background:#e8eaf3"></div>
<div class="a" style="left:256.30px;top:262.00px;width:489.40px;height:1.00px;background:#e8eaf3"></div>
<div class="a" style="left:256.30px;top:272.00px;width:489.40px;height:1.00px;background:#e8eaf3"></div>
<div class="a" style="left:256.30px;top:283.00px;width:489.40px;height:1.00px;background:#e8eaf3"></div>
<div class="a" style="left:256.30px;top:294.00px;width:489.40px;height:1.00px;background:#e8eaf3"></div>
<div class="a" style="left:256.30px;top:304.00px;width:489.40px;height:1.00px;background:#e8eaf3"></div>
<div class="a" style="left:256.30px;top:315.00px;width:489.40px;height:1.00px;background:#e8eaf3"></div>
<div class="a" style="left:256.30px;top:326.00px;width:489.40px;height:1.00px;background:#e8eaf3"></div>
<div class="a" style="left:256.30px;top:337.00px;width:489.40px;height:1.00px;background:#e8eaf3"></div>
<div class="a" style="left:256.30px;top:347.00px;width:489.40px;height:1.00px;background:#e8eaf3"></div>
<div class="a" style="left:256.30px;top:358.00px;width:489.40px;height:1.00px;background:#e8eaf3"></div>
<div class="a" style="left:256.30px;top:369.00px;width:489.40px;height:1.00px;background:#e8eaf3"></div>
<div class="a" style="left:256.30px;top:380.00px;width:489.40px;height:1.00px;background:#e8eaf3"></div>
<div class="a" style="left:256.30px;top:390.00px;width:489.40px;height:1.00px;background:#e8eaf3"></div>
<div class="a" style="left:256.30px;top:401.00px;width:489.40px;height:1.00px;background:#e8eaf3"></div>
<div class="a" style="left:256.30px;top:412.00px;width:489.40px;height:1.00px;background:#e8eaf3"></div>
<div class="t" style="left:258.00px;top:70.93px;font-size:6.9px;color:#3c3c4c;font-weight:bold;transform:scaleX(0.9056);">2016</div>
<div class="a" style="left:311.00px;top:69.00px;width:1.00px;height:349.20px;background:#ececf8"></div>
<div class="a" style="left:312.00px;top:69.00px;width:1.00px;height:349.20px;background:#9094dc"></div>
<div class="t" style="left:315.10px;top:70.93px;font-size:6.9px;color:#3c3c4c;font-weight:bold;transform:scaleX(0.9056);">2017</div>
<div class="a" style="left:393.00px;top:69.00px;width:1.00px;height:349.20px;background:#ececf8"></div>
<div class="a" style="left:394.00px;top:69.00px;width:1.00px;height:349.20px;background:#9094dc"></div>
<div class="t" style="left:396.80px;top:70.93px;font-size:6.9px;color:#3c3c4c;font-weight:bold;transform:scaleX(0.9056);">2018</div>
<div class="a" style="left:474.00px;top:69.00px;width:1.00px;height:349.20px;background:#ececf8"></div>
<div class="a" style="left:475.00px;top:69.00px;width:1.00px;height:349.20px;background:#9094dc"></div>
<div class="t" style="left:478.50px;top:70.93px;font-size:6.9px;color:#3c3c4c;font-weight:bold;transform:scaleX(0.9056);">2019</div>
<div class="a" style="left:556.00px;top:69.00px;width:1.00px;height:349.20px;background:#ececf8"></div>
<div class="a" style="left:557.00px;top:69.00px;width:1.00px;height:349.20px;background:#9094dc"></div>
<div class="t" style="left:560.20px;top:70.93px;font-size:6.9px;color:#3c3c4c;font-weight:bold;transform:scaleX(0.9056);">2020</div>
<div class="a" style="left:638.00px;top:69.00px;width:1.00px;height:349.20px;background:#ececf8"></div>
<div class="a" style="left:639.00px;top:69.00px;width:1.00px;height:349.20px;background:#9090bc"></div>
<div class="t" style="left:641.90px;top:70.93px;font-size:6.9px;color:#3c3c4c;font-weight:bold;transform:scaleX(0.9056);">2021</div>
<div class="a" style="left:719.00px;top:69.00px;width:1.00px;height:349.20px;background:#ececf8"></div>
<div class="a" style="left:720.00px;top:69.00px;width:1.00px;height:349.20px;background:#9090bc"></div>
<div class="t" style="left:723.60px;top:70.93px;font-size:6.9px;color:#3c3c4c;font-weight:bold;transform:scaleX(0.9056);">2022</div>
<div class="a" style="left:256.30px;top:176.12px;width:489.40px;height:10.74px;background:#c8d5f6"></div>
<div class="a" style="left:259.50px;top:80.06px;width:1.20px;height:337.94px;background:repeating-linear-gradient(to bottom,#e48a8a 0,#e48a8a 1.5px,rgba(255,255,255,0) 1.5px,rgba(255,255,255,0) 2.8px)"></div>
<div class="a" style="left:266.30px;top:173.78px;width:0.80px;height:26.42px;background:#606060"></div>
<div class="a" style="left:399.30px;top:206.20px;width:0.80px;height:2.00px;background:#606060"></div>
<div class="a" style="left:256.10px;top:84.00px;width:489.40px;height:2.00px;background:#343434"></div>
<svg class="a" style="left:498.5px;top:81.8px" width="5" height="4" viewBox="0 0 5 4"><path d="M0.5 3.2L2.5 1L4.5 3.2" stroke="#1a1a1a" stroke-width="1.1" fill="none"/></svg>
<div class="a" style="left:256.10px;top:95.00px;width:22.50px;height:2.00px;background:#343434"></div>
<svg class="a" style="left:276.60px;top:95.00px;overflow:visible" width="3" height="4" viewBox="0 0 3 4"><path d="M0 1Q1.6 1 2.2 2.6" stroke="#262626" stroke-width="1.3" fill="none"/></svg>
<div class="t" style="left:282.70px;top:93.44px;font-size:5.8px;color:#66666e;transform:scaleX(0.8129);">Phase 1</div>
<div class="a" style="left:254.90px;top:103.04px;width:23.70px;height:6.6px;background:linear-gradient(to bottom,#5a6ac8 0px,#5a6ac8 0.7px,#eef8ee 1.1px,#d2ecd2 2.2px,#7cc07c 3.6px,#3a9448 5.0px,#2c6e50 5.8px,#3a4aa8 6.6px);box-shadow:inset 0.7px 0 0 #5060c0,inset -0.7px 0 0 #5060c0"></div>
<div class="t" style="left:283.00px;top:104.18px;font-size:5.8px;color:#66666e;transform:scaleX(0.8472);">Task 1</div>
<div class="a" style="left:254.90px;top:113.78px;width:23.70px;height:6.6px;background:linear-gradient(to bottom,#5a6ac8 0px,#5a6ac8 0.7px,#eef8ee 1.1px,#d2ecd2 2.2px,#7cc07c 3.6px,#3a9448 5.0px,#2c6e50 5.8px,#3a4aa8 6.6px);box-shadow:inset 0.7px 0 0 #5060c0,inset -0.7px 0 0 #5060c0"></div>
<div class="t" style="left:283.00px;top:114.92px;font-size:5.8px;color:#66666e;transform:scaleX(0.8472);">Task 2</div>
<div class="a" style="left:254.90px;top:124.52px;width:23.70px;height:6.6px;background:linear-gradient(to bottom,#5a6ac8 0px,#5a6ac8 0.7px,#eef8ee 1.1px,#d2ecd2 2.2px,#7cc07c 3.6px,#3a9448 5.0px,#2c6e50 5.8px,#3a4aa8 6.6px);box-shadow:inset 0.7px 0 0 #5060c0,inset -0.7px 0 0 #5060c0"></div>
<div class="t" style="left:283.00px;top:125.66px;font-size:5.8px;color:#66666e;transform:scaleX(0.8472);">Task 3</div>
<div class="a" style="left:256.10px;top:138.00px;width:76.90px;height:2.00px;background:#343434"></div>
<svg class="a" style="left:331.00px;top:138.00px;overflow:visible" width="3" height="4" viewBox="0 0 3 4"><path d="M0 1Q1.6 1 2.2 2.6" stroke="#262626" stroke-width="1.3" fill="none"/></svg>
<div class="t" style="left:336.90px;top:136.40px;font-size:5.8px;color:#66666e;transform:scaleX(0.8035);">Phase 2</div>
<div class="a" style="left:254.90px;top:146.00px;width:37.00px;height:6.6px;background:linear-gradient(to bottom,#5a6ac8 0px,#5a6ac8 0.7px,#eef8ee 1.1px,#d2ecd2 2.2px,#7cc07c 3.6px,#3a9448 5.0px,#2c6e50 5.8px,#3a4aa8 6.6px);box-shadow:inset 0.7px 0 0 #5060c0,inset -0.7px 0 0 #5060c0"></div>
<div class="t" style="left:296.40px;top:147.14px;font-size:5.8px;color:#66666e;transform:scaleX(0.8412);">Task 1</div>
<div class="a" style="left:254.90px;top:156.74px;width:77.80px;height:6.6px;background:linear-gradient(to bottom,#5a6ac8 0px,#5a6ac8 0.7px,#eef8ee 1.1px,#d2ecd2 2.2px,#7cc07c 3.6px,#3a9448 5.0px,#2c6e50 5.8px,#3a4aa8 6.6px);box-shadow:inset 0.7px 0 0 #5060c0,inset -0.7px 0 0 #5060c0"></div>
<div class="t" style="left:336.90px;top:157.88px;font-size:5.8px;color:#66666e;transform:scaleX(0.8035);">Phase 3</div>
<div class="a" style="left:254.90px;top:167.48px;width:16.40px;height:6.6px;background:linear-gradient(to bottom,#5a6ac8 0px,#5a6ac8 0.7px,#eef8ee 1.1px,#d2ecd2 2.2px,#7cc07c 3.6px,#3a9448 5.0px,#2c6e50 5.8px,#3a4aa8 6.6px);box-shadow:inset 0.7px 0 0 #5060c0,inset -0.7px 0 0 #5060c0"></div>
<div class="t" style="left:275.60px;top:168.62px;font-size:5.8px;color:#66666e;transform:scaleX(0.8731);">Estimate</div>
<div class="a" style="left:254.90px;top:174.80px;width:337.00px;height:13.20px;background:repeating-conic-gradient(#a8a8a8 0 25%,#d8d8d8 0 50%) 0 0/2px 2px"></div>
<div class="a" style="left:254.90px;top:178px;width:334.90px;height:7px;background:linear-gradient(to bottom,#3a4ad0 0px,#3a4ad0 1px,#dfe6fc 1.3px,#f2f5ff 2.2px,#e4eafd 3.2px,#a8b6f2 4.6px,#8090e8 5.8px,#3a4ad0 6px,#3a4ad0 7px);box-shadow:inset -1px 0 0 #3a4ad0"></div>
<div class="t" style="left:593.30px;top:179.36px;font-size:5.8px;color:#66666e;transform:scaleX(0.8176);">Phase 4</div>
<div class="a" style="left:254.90px;top:188.96px;width:98.40px;height:6.6px;background:linear-gradient(to bottom,#5a6ac8 0px,#5a6ac8 0.7px,#eef8ee 1.1px,#d2ecd2 2.2px,#7cc07c 3.6px,#3a9448 5.0px,#2c6e50 5.8px,#3a4aa8 6.6px);box-shadow:inset 0.7px 0 0 #5060c0,inset -0.7px 0 0 #5060c0"></div>
<div class="t" style="left:357.30px;top:190.10px;font-size:5.8px;color:#66666e;transform:scaleX(0.8317);">Phase 5</div>
<div class="a" style="left:254.90px;top:199.70px;width:149.50px;height:6.6px;background:linear-gradient(to bottom,#5a6ac8 0px,#5a6ac8 0.7px,#eef8ee 1.1px,#d2ecd2 2.2px,#7cc07c 3.6px,#3a9448 5.0px,#2c6e50 5.8px,#3a4aa8 6.6px);box-shadow:inset 0.7px 0 0 #5060c0,inset -0.7px 0 0 #5060c0"></div>
<div class="t" style="left:408.70px;top:200.84px;font-size:5.8px;color:#66666e;transform:scaleX(0.8129);">Phase 6</div>
<div class="a" style="left:384.40px;top:210.44px;width:361.30px;height:6.6px;background:linear-gradient(to bottom,#5a6ac8 0px,#5a6ac8 0.7px,#eef8ee 1.1px,#d2ecd2 2.2px,#7cc07c 3.6px,#3a9448 5.0px,#2c6e50 5.8px,#3a4aa8 6.6px);box-shadow:inset 0.7px 0 0 #5060c0,inset -0.7px 0 0 #5060c0"></div>
<div class="a" style="left:2.00px;top:39.50px;width:1.00px;height:383.50px;background:#dadada"></div>
<div class="a" style="left:749.00px;top:0.00px;width:1.00px;height:423.00px;background:#bdbdbd"></div>
</div></body></html>
